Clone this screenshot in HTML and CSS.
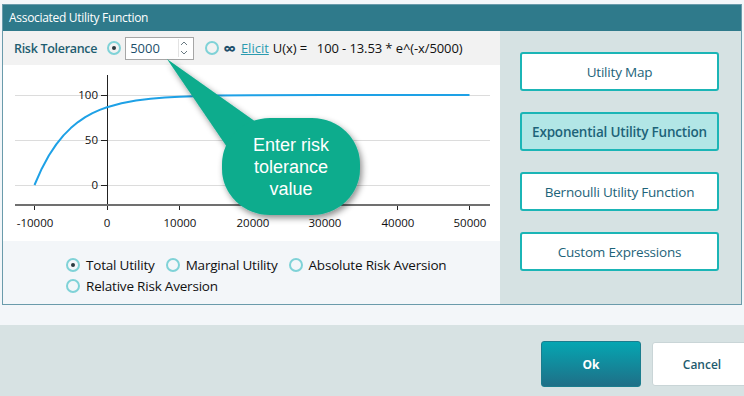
FILE: index.html
```html
<!DOCTYPE html>
<html lang="en">
<head>
  <meta charset="UTF-8">
  <title>Associated Utility Function</title>
  <link rel="stylesheet" href="styles.css">
</head>
<body>
  <div class="group">
    <div class="group-title">Associated Utility Function</div>
    <div class="group-body">
      <div class="left">
        <div class="toolbar">
          <span class="label">Risk Tolerance</span>
          <span class="radio checked"></span>
          <div class="numbox">
            <span class="numval">5000</span>
            <div class="spin">
              <svg width="10" height="9" viewBox="0 0 10 9"><path d="M2 6 L5 3 L8 6" fill="none" stroke="#6a7a82" stroke-width="1"/></svg>
              <svg width="10" height="9" viewBox="0 0 10 9"><path d="M2 3 L5 6 L8 3" fill="none" stroke="#6a7a82" stroke-width="1"/></svg>
            </div>
          </div>
          <span class="radio"></span>
          <span class="inf">&infin;</span>
          <a class="elicit" href="#">Elicit</a>
          <span class="formula">U(x) = &nbsp; 100 - 13.53 * e^(-x/5000)</span>
        </div>
        <div class="chart">
          <svg width="497" height="176" viewBox="0 0 497 176">
            <g stroke="#dcdcdc" stroke-width="1">
              <line x1="12" y1="30.5" x2="487" y2="30.5"/>
              <line x1="12" y1="75.5" x2="487" y2="75.5"/>
              <line x1="12" y1="120.5" x2="487" y2="120.5"/>
            </g>
            <g stroke="#222" stroke-width="1">
              <line x1="104.5" y1="10" x2="104.5" y2="145"/>
              <line x1="98" y1="30.5" x2="104" y2="30.5"/>
              <line x1="98" y1="75.5" x2="104" y2="75.5"/>
              <line x1="98" y1="120.5" x2="104" y2="120.5"/>
              <line x1="31.5" y1="141" x2="31.5" y2="145"/>
              <line x1="176.5" y1="141" x2="176.5" y2="145"/>
              <line x1="249.5" y1="141" x2="249.5" y2="145"/>
              <line x1="321.5" y1="141" x2="321.5" y2="145"/>
              <line x1="394.5" y1="141" x2="394.5" y2="145"/>
              <line x1="466.5" y1="141" x2="466.5" y2="145"/>
            </g>
            <line x1="12" y1="140" x2="487" y2="140" stroke="#707070" stroke-width="2"/>
            <g class="ylab" text-anchor="end">
              <text x="95" y="34">100</text>
              <text x="95" y="79">50</text>
              <text x="95" y="124">0</text>
            </g>
            <g class="xlab" text-anchor="middle">
              <text x="32" y="162">-10000</text>
              <text x="104" y="162">0</text>
              <text x="177" y="162">10000</text>
              <text x="250" y="162">20000</text>
              <text x="322" y="162">30000</text>
              <text x="395" y="162">40000</text>
              <text x="467" y="162">50000</text>
            </g>
            <path d="M31.5 120 L38.75 103.7 L46 90.3 L53.25 79.4 L60.5 70.4 L67.75 63.1 L75 57.1 L82.25 52.2 L89.5 48.2 L96.75 44.9 L104 42.2 L118.5 38.2 L133 35.5 L147.5 33.7 L162 32.5 L176.5 31.7 L212.75 30.6 L249 30.2 L321.5 30 L466.5 30" fill="none" stroke="#1ea1e6" stroke-width="2" stroke-linejoin="round"/>
          </svg>
        </div>
        <div class="series">
          <div class="series-row">
            <span class="opt"><span class="radio checked"></span>Total Utility</span>
            <span class="opt"><span class="radio"></span>Marginal Utility</span>
            <span class="opt"><span class="radio"></span>Absolute Risk Aversion</span>
          </div>
          <div class="series-row">
            <span class="opt"><span class="radio"></span>Relative Risk Aversion</span>
          </div>
        </div>
      </div>
      <div class="right">
        <button class="side-btn">Utility Map</button>
        <button class="side-btn active">Exponential Utility Function</button>
        <button class="side-btn">Bernoulli Utility Function</button>
        <button class="side-btn">Custom Expressions</button>
      </div>
    </div>
  </div>
  <div class="gap"></div>
  <div class="footer">
    <button class="ok">Ok</button>
    <button class="cancel">Cancel</button>
  </div>

  <svg class="callout" width="744" height="396" viewBox="0 0 744 396">
    <defs>
      <filter id="shadow" x="-20%" y="-20%" width="140%" height="140%">
        <feDropShadow dx="2" dy="3" stdDeviation="3" flood-color="#000" flood-opacity="0.45"/>
      </filter>
    </defs>
    <g filter="url(#shadow)" fill="#0aac8d">
      <path d="M167 59 L256 122 L229 150 Z"/>
      <rect x="222" y="118" width="138" height="97" rx="48" ry="46"/>
    </g>
    <g class="callout-text" text-anchor="middle" fill="#fff">
      <text x="291" y="151">Enter risk</text>
      <text x="291" y="173">tolerance</text>
      <text x="291" y="195">value</text>
    </g>
  </svg>
</body>
</html>
```

FILE: styles.css
```css
body {
  margin: 0;
  background: #f3f6f9;
  font-family: "Open Sans", "Noto Sans", sans-serif;
  font-size: 12px;
  color: #111;
  position: relative;
  width: 744px;
  height: 396px;
  overflow: hidden;
  padding-top: 4px;
  box-sizing: border-box;
}
.group {
  margin: 0 2px;
  border: 1px solid #6a9bab;
}
.group-title {
  height: 26px;
  line-height: 26px;
  background: #2f7a8b;
  color: #fff;
  padding-left: 6px;
  font-size: 12px;
  letter-spacing: -0.3px;
}
.group-body {
  display: flex;
  height: 273px;
}
.left {
  width: 497px;
  display: flex;
  flex-direction: column;
}
.toolbar {
  height: 34px;
  background: #f2f2f2;
  display: flex;
  align-items: center;
  padding-left: 11px;
}
.label {
  color: #1e5d70;
  font-weight: 600;
  font-size: 12.5px;
  letter-spacing: -0.3px;
  margin-right: 10px;
}
.radio {
  display: inline-block;
  width: 10px;
  height: 10px;
  border: 2px solid #7fd2d7;
  border-radius: 50%;
  position: relative;
  flex-shrink: 0;
}
.radio.checked::after {
  content: "";
  position: absolute;
  left: 3px;
  top: 3px;
  width: 4px;
  height: 4px;
  border-radius: 50%;
  background: #2b3a40;
}
.numbox {
  width: 69px;
  height: 23px;
  border: 1px solid #a6a6a6;
  background: #fff;
  margin-left: 4px;
  display: flex;
  align-items: center;
  justify-content: space-between;
  padding-left: 4px;
  box-sizing: border-box;
}
.numval {
  color: #1d4f6b;
  font-size: 13px;
}
.spin {
  display: flex;
  flex-direction: column;
  margin-right: 4px;
  border-left: 1px solid #e3e3e3;
}
.spin svg {
  display: block;
}
.numbox + .radio {
  margin-left: 11px;
}
.inf {
  color: #1d4f6b;
  font-size: 18px;
  font-weight: 700;
  line-height: 1;
  margin: 0 5px 0 4px;
}
.elicit {
  color: #2b9bb0;
  text-decoration: underline;
  margin-right: 4px;
  font-size: 13px;
}
.formula {
  font-size: 13px;
  color: #111;
  letter-spacing: -0.1px;
}
.chart {
  height: 176px;
  background: #fff;
}
.chart svg {
  display: block;
}
.ylab text, .xlab text {
  font-family: "Open Sans", sans-serif;
  font-size: 11.5px;
  fill: #111;
}
.series {
  flex: 1;
  background: #f3f6f9;
  padding: 15px 0 0 63px;
  display: flex;
  flex-direction: column;
  gap: 3px;
}
.series-row {
  display: flex;
  gap: 11px;
}
.opt {
  display: flex;
  align-items: center;
  gap: 6px;
  font-size: 13.5px;
  letter-spacing: -0.2px;
}
.right {
  flex: 1;
  background: #d6e2e3;
  display: flex;
  flex-direction: column;
  padding: 21px 0 0 20px;
  gap: 21px;
}
.side-btn {
  width: 199px;
  height: 39px;
  background: #fff;
  border: 2px solid #1bb5b6;
  border-radius: 3px;
  color: #1d6379;
  font-family: inherit;
  font-size: 13.5px;
  letter-spacing: -0.2px;
  cursor: pointer;
}
.side-btn.active {
  background: #b2e6e6;
  font-weight: 600;
}
.gap {
  height: 20px;
}
.footer {
  height: 71px;
  background: #d7e2e3;
  display: flex;
  padding: 16px 0 0 541px;
  gap: 11px;
  box-sizing: border-box;
}
.ok, .cancel {
  width: 100px;
  height: 46px;
  border-radius: 3px;
  font-family: inherit;
  font-size: 12px;
  cursor: pointer;
  flex-shrink: 0;
}
.ok {
  background: linear-gradient(#05a6b2, #1f6f87);
  border: 1px solid #1b7d8e;
  color: #fff;
  font-weight: 700;
}
.cancel {
  background: #fff;
  border: 1px solid #c9d5d7;
  color: #1d5b6e;
  font-weight: 600;
  height: 44px;
  margin-top: 1px;
}
.callout {
  position: absolute;
  left: 0;
  top: 0;
  pointer-events: none;
}
.callout-text text {
  font-family: "Liberation Sans", Arial, sans-serif;
  font-size: 18px;
}
```
